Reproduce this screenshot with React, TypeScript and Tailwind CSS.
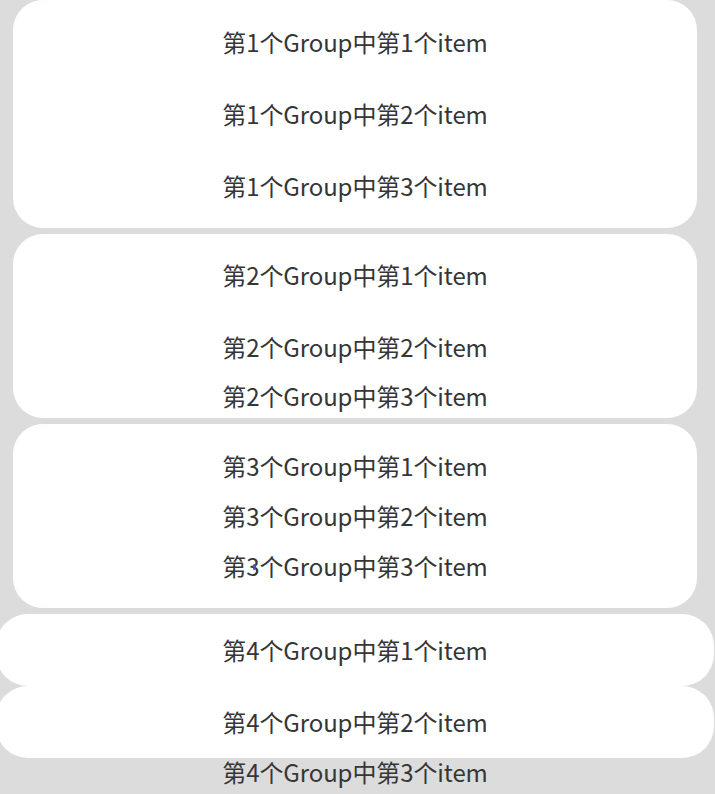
import React from "react";

const font = {
  fontFamily: '"Noto Sans CJK SC", "Noto Sans", sans-serif',
};

const txt = "text-[24px] leading-none text-[#363636] tracking-[-0.1px]";

export default function App() {
  return (
    <div
      className="w-[715px] h-[794px] bg-[#dcdcdc] overflow-hidden pl-[13px] pr-[18px] flex flex-col"
      style={font}
    >
      {/* Group 1 */}
      <div className="bg-white rounded-[30px] pt-[6px] pb-[6px] flex flex-col">
        <div className="flex items-center justify-center h-[72px]">
          <span className={txt}>第1个Group中第1个item</span>
        </div>
        <div className="flex items-center justify-center h-[72px]">
          <span className={txt}>第1个Group中第2个item</span>
        </div>
        <div className="flex items-center justify-center h-[72px]">
          <span className={txt}>第1个Group中第3个item</span>
        </div>
      </div>

      {/* Group 2 */}
      <div className="mt-[6px] bg-white rounded-[30px] h-[184px] pt-[5px] flex flex-col">
        <div className="flex items-center justify-center h-[72px]">
          <span className={txt}>第2个Group中第1个item</span>
        </div>
        <div className="flex items-center justify-center h-[72px]">
          <span className={txt}>第2个Group中第2个item</span>
        </div>
        <div className="flex items-center justify-center h-[26px]">
          <span className={txt}>第2个Group中第3个item</span>
        </div>
      </div>

      {/* Group 3 */}
      <div className="mt-[6px] bg-white rounded-[30px] h-[184px] pt-[17px] flex flex-col">
        <div className="flex items-center justify-center h-[50px]">
          <span className={txt}>第3个Group中第1个item</span>
        </div>
        <div className="flex items-center justify-center h-[50px]">
          <span className={txt}>第3个Group中第2个item</span>
        </div>
        <div className="flex items-center justify-center h-[50px]">
          <span className={`relative ${txt}`}>
            第3个Group中第3个item
            <span className="absolute left-[31px] top-[10px] w-[3px] h-[6px] rounded-full bg-[#4b50b0]" />
          </span>
        </div>
      </div>

      {/* Group 4 */}
      <div className="mt-[6px] mx-[-17px] flex flex-col">
        <div className="bg-white rounded-[32px] h-[72px] flex items-center justify-center">
          <span className={txt}>第4个Group中第1个item</span>
        </div>
        <div className="bg-white rounded-[32px] h-[72px] flex items-center justify-center">
          <span className={txt}>第4个Group中第2个item</span>
        </div>
        <div className="h-[27px] flex items-center justify-center">
          <span className={txt}>第4个Group中第3个item</span>
        </div>
      </div>
    </div>
  );
}
